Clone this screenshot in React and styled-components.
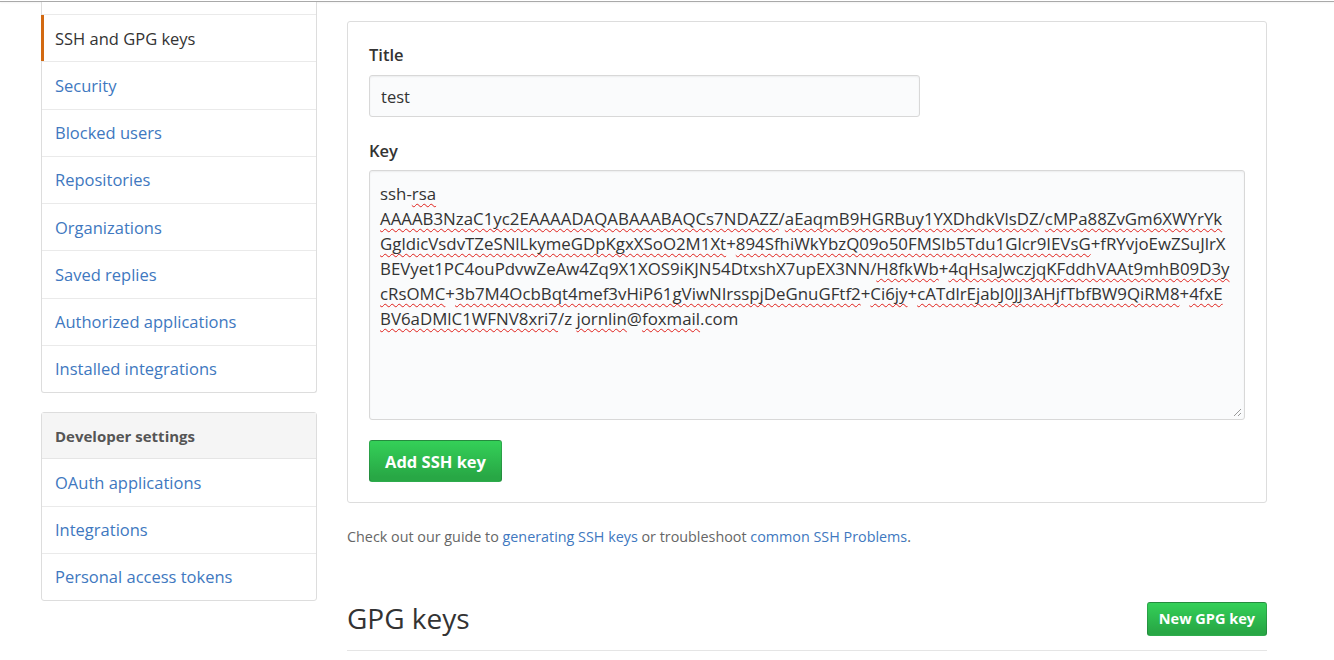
import styled, { createGlobalStyle } from 'styled-components'

const GlobalStyle = createGlobalStyle`
  body {
    margin: 0;
    background: #fff;
    color: #333;
    font-family: "Open Sans", "Liberation Sans", sans-serif;
    font-size: 16.5px;
    overflow: hidden;
  }
`

const TopRule = styled.div`
  height: 1px;
  margin-top: 1px;
  background: #a9a9a9;
  box-shadow: 0 1px 2px #eee;
`

const Page = styled.div`
  display: flex;
  align-items: flex-start;
  gap: 30px;
  padding-left: 41px;
`

const Sidebar = styled.nav`
  width: 276px;
  display: flex;
  flex-direction: column;
  gap: 19px;
`

const Menu = styled.div`
  border: 1px solid #ddd;
  border-radius: ${p => (p.$cut ? '0 0 3px 3px' : '3px')};
  ${p => p.$cut && 'border-top: none;'}
  background: #fff;
`

// the part of the list scrolled above the window
const MenuStub = styled.div`
  height: 12px;
`

const MenuHeading = styled.div`
  height: 45.25px;
  padding: 0 13px;
  display: flex;
  align-items: center;
  background: #f5f5f5;
  color: #555;
  font-weight: 700;
  font-size: 15px;
  border-bottom: 1px solid #e5e5e5;
`

const MenuItem = styled.a`
  display: flex;
  align-items: center;
  position: relative;
  height: 46.25px;
  padding: 0 13px;
  color: ${p => (p.$active ? '#333' : '#4078c0')};
  text-decoration: none;
  border-top: ${p => (p.$first ? 'none' : '1px solid #eaeaea')};
  ${p => p.$active && `
    &::before {
      content: "";
      position: absolute;
      left: -1px;
      top: 0;
      bottom: 0;
      width: 3px;
      background: #d26911;
    }
  `}
`

const Main = styled.main`
  width: 920px;
  margin-top: 19px;
`

const FormBox = styled.div`
  border: 1px solid #ddd;
  border-radius: 3px;
  padding: 20px 21px;
`

const Label = styled.div`
  font-weight: 600;
  line-height: 25px;
  margin-bottom: ${p => p.$gap}px;
  margin-top: ${p => p.$top || 0}px;
`

const Input = styled.input`
  display: block;
  box-sizing: border-box;
  width: 551px;
  height: 42px;
  padding: 0 11px;
  border: 1px solid #d8d8d8;
  border-radius: 3px;
  background: #fafbfc;
  box-shadow: inset 0 1px 2px rgba(0, 0, 0, 0.06);
  font: inherit;
  color: #333;
  outline: none;
`

const KeyArea = styled.div`
  position: relative;
  box-sizing: border-box;
  width: 876px;
  height: 250px;
  padding: 10px 10px;
  border: 1px solid #d8d8d8;
  border-radius: 3px;
  background: #fafbfc;
  box-shadow: inset 0 1px 2px rgba(0, 0, 0, 0.06);
  font-size: 16.85px;
  line-height: 25px;
  white-space: pre;
  color: #333;
`

const Miss = styled.span`
  text-decoration: underline wavy #e0201a;
  text-decoration-thickness: 1px;
  text-underline-offset: 3px;
  text-decoration-skip-ink: none;
`

const Grip = styled.svg`
  position: absolute;
  right: 2px;
  bottom: 2px;
`

const Button = styled.button`
  display: inline-flex;
  align-items: center;
  justify-content: center;
  box-sizing: border-box;
  height: ${p => (p.$small ? 34 : 42)}px;
  padding: 0 ${p => (p.$small ? 11 : 15)}px;
  margin-top: ${p => p.$top || 0}px;
  border: 1px solid rgba(27, 31, 35, 0.2);
  border-radius: 3px;
  background: linear-gradient(#34d058, #28a745 90%);
  color: #fff;
  font-family: inherit;
  font-weight: 700;
  font-size: ${p => (p.$small ? 14.5 : 16.5)}px;
  cursor: pointer;
`

const Hint = styled.p`
  margin: 21px 0 0;
  line-height: 25px;
  font-size: 14.35px;
  color: #666;
  a {
    color: #4078c0;
    text-decoration: none;
  }
`

const Subhead = styled.div`
  display: flex;
  align-items: center;
  justify-content: space-between;
  margin-top: 47px;
  padding-bottom: 9px;
  border-bottom: 1px solid #e5e5e5;
`

const SubheadTitle = styled.h2`
  margin: 0;
  font-size: 28px;
  font-weight: 400;
  line-height: 45px;
  color: #333;
`

const menuItems = [
  'SSH and GPG keys',
  'Security',
  'Blocked users',
  'Repositories',
  'Organizations',
  'Saved replies',
  'Authorized applications',
  'Installed integrations',
]

const devItems = ['OAuth applications', 'Integrations', 'Personal access tokens']

function KeyText() {
  return (
    <>
      {'ssh-'}<Miss>rsa</Miss>{'\n'}
      <Miss>AAAAB3NzaC1yc2EAAAADAQABAAABAQCs7NDAZZ</Miss>/<Miss>aEaqmB9HGRBuy1YXDhdkVlsDZ</Miss>/<Miss>cMPa88ZvGm6XWYrYk</Miss>{'\n'}
      <Miss>GgldicVsdvTZeSNlLkymeGDpKgxXSoO2M1Xt</Miss>+<Miss>894SfhiWkYbzQ09o50FMSIb5Tdu1Glcr9IEVsG</Miss>+fRYvjoEwZSuJlrX{'\n'}
      BEVyet1PC4ouPdvwZeAw4Zq9X1XOS9iKJN54DtxshX7upEX3NN/<Miss>H8fkWb</Miss>+<Miss>4qHsaJwczjqKFddhVAAt9mhB09D3y</Miss>{'\n'}
      <Miss>cRsOMC</Miss>+<Miss>3b7M4OcbBqt4mef3vHiP61gViwNIrsspjDeGnuGFtf2</Miss>+<Miss>Ci6jy</Miss>+<Miss>cATdlrEjabJ0JJ3AHjfTbfBW9QiRM8</Miss>+<Miss>4fxE</Miss>{'\n'}
      <Miss>BV6aDMlC1WFNV8xri7</Miss>/z <Miss>jornlin</Miss>@<Miss>foxmail</Miss>.com
    </>
  )
}

export default function App() {
  return (
    <>
      <GlobalStyle />
      <TopRule />
      <Page>
        <Sidebar>
          <Menu $cut>
            <MenuStub />
            {menuItems.map(item => (
              <MenuItem key={item} $active={item === 'SSH and GPG keys'}>
                {item}
              </MenuItem>
            ))}
          </Menu>
          <Menu>
            <MenuHeading>Developer settings</MenuHeading>
            {devItems.map((item, i) => (
              <MenuItem key={item} $first={i === 0}>{item}</MenuItem>
            ))}
          </Menu>
        </Sidebar>
        <Main>
          <FormBox>
            <Label $gap={8}>Title</Label>
            <Input defaultValue="test" />
            <Label $top={21} $gap={7}>Key</Label>
            <KeyArea>
              <KeyText />
              <Grip width="9" height="9" viewBox="0 0 9 9">
                <path d="M8 1 L1 8 M8 5 L5 8" stroke="#999" strokeWidth="1" />
              </Grip>
            </KeyArea>
            <Button $top={20}>Add SSH key</Button>
          </FormBox>
          <Hint>
            Check out our guide to <a>generating SSH keys</a> or troubleshoot <a>common SSH Problems</a>.
          </Hint>
          <Subhead>
            <SubheadTitle>GPG keys</SubheadTitle>
            <Button $small>New GPG key</Button>
          </Subhead>
        </Main>
      </Page>
    </>
  )
}
